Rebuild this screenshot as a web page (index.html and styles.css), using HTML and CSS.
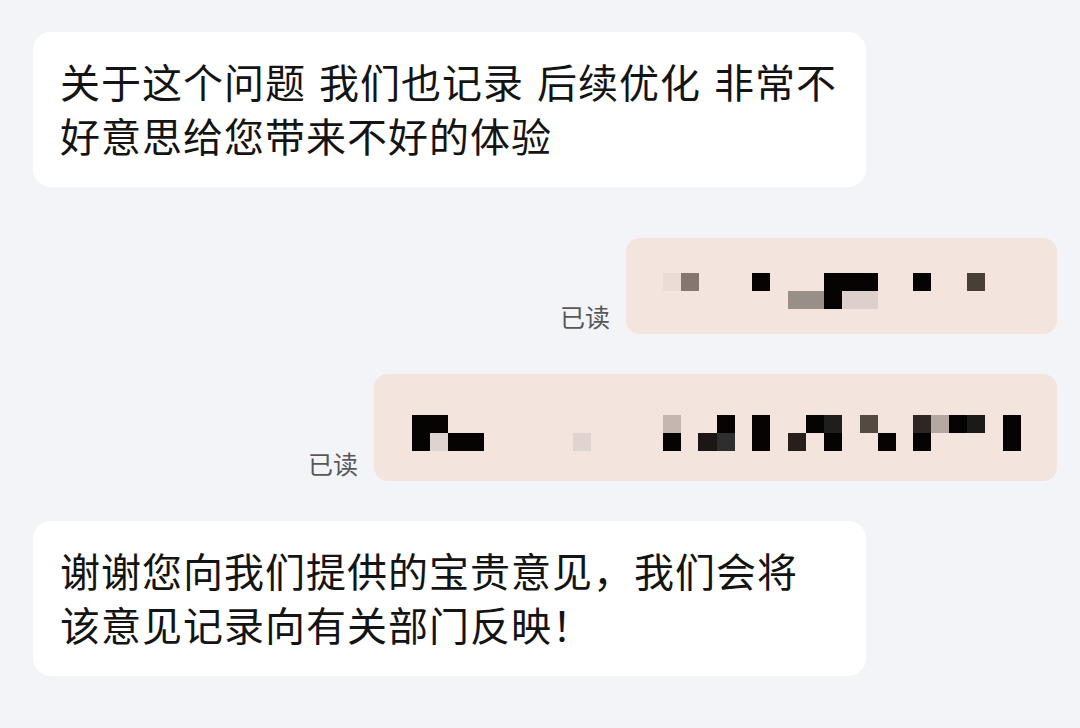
FILE: index.html
```html
<!DOCTYPE html>
<html lang="zh-CN">
<head>
<meta charset="utf-8">
<title>聊天记录</title>
<link rel="stylesheet" href="styles.css">
</head>
<body>
<main class="chat">
  <div class="row row-in">
    <div class="bubble bubble-in">关于这个问题 我们也记录 后续优化 非常不好意思给您带来不好的体验</div>
  </div>

  <div class="row row-out row-gap-lg">
    <span class="read">已读</span>
    <div class="bubble bubble-out bubble-out-short">
      <svg class="mosaic" width="431" height="96" viewBox="0 0 431 96">
        <rect x="37" y="35" width="18" height="18" fill="#ebdcd6"/>
        <rect x="55" y="35" width="18" height="18" fill="#857670"/>
        <rect x="126" y="35" width="18" height="18" fill="#060303"/>
        <rect x="198" y="35" width="54" height="18" fill="#060303"/>
        <rect x="287" y="35" width="18" height="18" fill="#060303"/>
        <rect x="341" y="35" width="18" height="18" fill="#4a3e38"/>
        <rect x="162" y="53" width="36" height="18" fill="#9a8e89"/>
        <rect x="198" y="53" width="18" height="18" fill="#060303"/>
        <rect x="216" y="53" width="36" height="18" fill="#ddd0cc"/>
      </svg>
    </div>
  </div>

  <div class="row row-out">
    <span class="read">已读</span>
    <div class="bubble bubble-out bubble-out-long">
      <svg class="mosaic" width="683" height="107" viewBox="0 0 683 107">
        <rect x="38" y="41" width="36" height="18" fill="#060303"/>
        <rect x="289" y="41" width="18" height="18" fill="#c4b6b0"/>
        <rect x="343" y="41" width="18" height="18" fill="#060303"/>
        <rect x="378" y="41" width="18" height="18" fill="#060303"/>
        <rect x="432" y="41" width="18" height="18" fill="#060303"/>
        <rect x="450" y="41" width="18" height="18" fill="#1e1e1c"/>
        <rect x="486" y="41" width="18" height="18" fill="#544a44"/>
        <rect x="539" y="41" width="18" height="18" fill="#2e2622"/>
        <rect x="557" y="41" width="18" height="18" fill="#b4a8a2"/>
        <rect x="575" y="41" width="18" height="18" fill="#060303"/>
        <rect x="593" y="41" width="18" height="18" fill="#1a1a18"/>
        <rect x="629" y="41" width="18" height="18" fill="#060303"/>
        <rect x="38" y="59" width="18" height="18" fill="#060303"/>
        <rect x="56" y="59" width="18" height="18" fill="#ddd3cf"/>
        <rect x="74" y="59" width="36" height="18" fill="#060303"/>
        <rect x="199" y="59" width="18" height="18" fill="#e0d4d0"/>
        <rect x="289" y="59" width="18" height="18" fill="#060303"/>
        <rect x="324" y="59" width="19" height="18" fill="#1c1614"/>
        <rect x="343" y="59" width="18" height="18" fill="#2e2e2e"/>
        <rect x="378" y="59" width="18" height="18" fill="#060303"/>
        <rect x="414" y="59" width="18" height="18" fill="#281e1a"/>
        <rect x="450" y="59" width="18" height="18" fill="#060303"/>
        <rect x="504" y="59" width="18" height="18" fill="#060303"/>
        <rect x="539" y="59" width="18" height="18" fill="#060303"/>
        <rect x="629" y="59" width="18" height="18" fill="#060303"/>
      </svg>
    </div>
  </div>

  <div class="row row-in">
    <div class="bubble bubble-in">谢谢您向我们提供的宝贵意见，我们会将该意见记录向有关部门反映！</div>
  </div>
</main>
</body>
</html>
```

FILE: styles.css
```css
html, body {
  margin: 0;
  padding: 0;
}

body {
  background: #f3f4f8;
  font-family: "Noto Sans CJK SC", "Noto Sans", sans-serif;
  color: #141414;
  width: 1080px;
  height: 728px;
  overflow: hidden;
}

.chat {
  display: flex;
  flex-direction: column;
  gap: 40px;
  padding: 32px 23px 0 33px;
}

.row {
  display: flex;
}

.row-in {
  justify-content: flex-start;
}

.row-out {
  justify-content: flex-end;
  align-items: flex-end;
  gap: 16px;
}

.row-gap-lg {
  margin-top: 11px;
}

.bubble {
  box-sizing: border-box;
}

.bubble-in {
  width: 833px;
  background: #ffffff;
  border-radius: 18px;
  padding: 22px 28px 25px 27px;
  font-size: 40px;
  line-height: 54px;
  letter-spacing: 1px;
  word-spacing: 3px;
}

.bubble-out {
  background: #f4e4de;
  border-radius: 14px;
  overflow: hidden;
  display: flex;
}

.bubble-out-short {
  width: 431px;
  height: 96px;
}

.bubble-out-long {
  width: 683px;
  height: 107px;
}

.mosaic {
  display: block;
}

.read {
  font-size: 25px;
  line-height: 25px;
  color: #585858;
  margin-bottom: 5px;
}
```
